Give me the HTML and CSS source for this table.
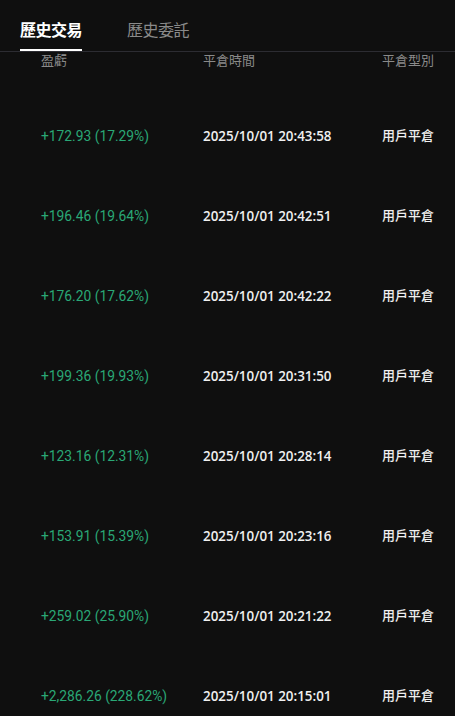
FILE: index.html
```html
<html lang="zh-Hant">
<head>
    <meta charset="UTF-8">
    <meta name="viewport" content="width=device-width, initial-scale=1.0">
    <title>歷史交易</title>
    <link rel="stylesheet" href="styles.css">
</head>
<body>
    <div class="tabs">
        <div class="tab active">歷史交易</div>
        <div class="tab">歷史委託</div>
    </div>

    <table class="trades">
        <thead>
            <tr>
                <th class="col-pnl">盈虧</th>
                <th class="col-time">平倉時間</th>
                <th class="col-type">平倉型別</th>
            </tr>
        </thead>
        <tbody id="tradeList">
            <!-- rows filled by script -->
        </tbody>
    </table>

    <script>
        const trades = [
            { pnl: '+172.93 (17.29%)', time: '2025/10/01 20:43:58', type: '用戶平倉' },
            { pnl: '+196.46 (19.64%)', time: '2025/10/01 20:42:51', type: '用戶平倉' },
            { pnl: '+176.20 (17.62%)', time: '2025/10/01 20:42:22', type: '用戶平倉' },
            { pnl: '+199.36 (19.93%)', time: '2025/10/01 20:31:50', type: '用戶平倉' },
            { pnl: '+123.16 (12.31%)', time: '2025/10/01 20:28:14', type: '用戶平倉' },
            { pnl: '+153.91 (15.39%)', time: '2025/10/01 20:23:16', type: '用戶平倉' },
            { pnl: '+259.02 (25.90%)', time: '2025/10/01 20:21:22', type: '用戶平倉' },
            { pnl: '+2,286.26 (228.62%)', time: '2025/10/01 20:15:01', type: '用戶平倉' }
        ];

        const tradeList = document.getElementById('tradeList');
        trades.forEach(t => {
            tradeList.innerHTML += `
                <tr>
                    <td class="col-pnl profit">${t.pnl}</td>
                    <td class="col-time">${t.time}</td>
                    <td class="col-type">${t.type}</td>
                </tr>
            `;
        });
    </script>
</body>
</html>
```

FILE: styles.css
```css
body {
    margin: 0;
    background-color: #0f0f0f;
    color: #f0f0f0;
    font-family: "Noto Sans", "Noto Sans CJK TC", sans-serif;
    overflow: hidden;
}
.tabs {
    display: flex;
    gap: 45px;
    padding: 0 20px;
    height: 51px;
    border-bottom: 1px solid #2c2c32;
}
.tab {
    font-size: 16px;
    line-height: 20px;
    padding-top: 19px;
    color: #8a8a8a;
    font-family: "Noto Sans CJK TC", sans-serif;
    letter-spacing: -0.5px;
}
.tab.active {
    color: #ffffff;
    font-weight: 600;
    border-bottom: 2px solid #ffffff;
    height: 30px;
    margin-bottom: -1px;
}
.trades {
    border-collapse: collapse;
    table-layout: fixed;
    width: 455px;
}
th, td {
    padding: 0;
    text-align: left;
    white-space: nowrap;
}
th {
    font-family: "Noto Sans CJK TC", sans-serif;
    font-size: 13px;
    font-weight: 400;
    color: #8a8a8a;
    line-height: 16px;
    height: 44px;
    vertical-align: top;
}
td {
    height: 80px;
    font-family: "Open Sans", "Noto Sans CJK TC", sans-serif;
    font-size: 13.4px;
    font-weight: 600;
    vertical-align: middle;
}
.col-pnl {
    width: 162px;
    padding-left: 41px;
}
.col-time {
    width: 179px;
}
.col-type {
    width: 73px;
}
td.col-type {
    font-family: "Noto Sans CJK TC", sans-serif;
    font-size: 13px;
    font-weight: 500;
    padding-bottom: 3px;
}
.profit {
    font-family: Roboto, sans-serif;
    font-size: 13.8px;
    font-weight: 400;
    color: #2aa876;
}
```
